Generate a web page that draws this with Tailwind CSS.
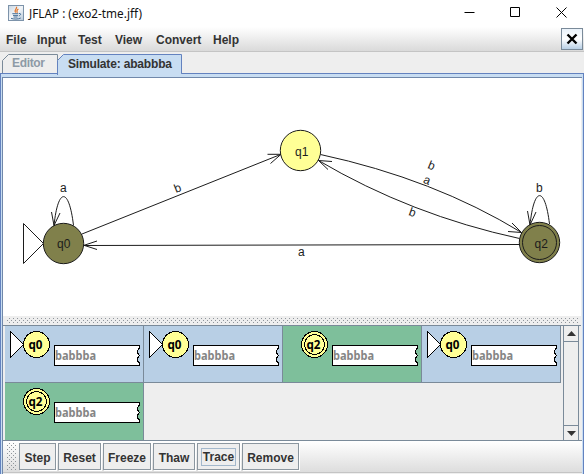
<!DOCTYPE html>
<html lang="en">
<head>
<meta charset="utf-8">
<title>JFLAP : (exo2-tme.jff)</title>
<script src="https://cdn.jsdelivr.net/npm/@tailwindcss/browser@4"></script>
</head>
<body class="w-[584px] h-[474px] overflow-hidden bg-[#eeeeee] font-['Liberation_Sans',Arial,sans-serif] text-[12px] text-[#333333]">
<svg class="absolute w-0 h-0">
  <defs>
    <pattern id="dots" width="4" height="4" patternUnits="userSpaceOnUse">
      <rect width="1" height="1" fill="#8f959b"/><rect x="2" y="2" width="1" height="1" fill="#8f959b"/>
    </pattern>
    <symbol id="tape" viewBox="0 0 139 57">
      <path d="M49.5 19.5H134.5V22L132.5 24.5V27L134.5 29.5L132.5 32V35L134.5 37V39.5H49.5Z" fill="#fff" stroke="#000" shape-rendering="crispEdges"/>
      <text x="50" y="34" font-family="'Noto Sans',sans-serif" font-size="12" font-weight="bold" fill="#858585" textLength="41" lengthAdjust="spacingAndGlyphs">babbba</text>
    </symbol>
    <symbol id="cfg0" viewBox="0 0 139 57">
      <path d="M5.5 5.5V31.5L18.5 18.5Z" fill="#fff" stroke="#000" shape-rendering="crispEdges"/>
      <circle cx="31.5" cy="18.5" r="13" fill="#ffff96" stroke="#000" shape-rendering="crispEdges"/>
      <text x="23.500" y="23" font-family="'Noto Sans',sans-serif" font-size="12" font-weight="bold" fill="#000" textLength="14" lengthAdjust="spacingAndGlyphs">q0</text>
      <use href="#tape" width="139" height="57"/>
    </symbol>
    <symbol id="cfg2" viewBox="0 0 139 57">
      <circle cx="31.5" cy="18.5" r="13" fill="#ffff96" stroke="#000" shape-rendering="crispEdges"/>
      <circle cx="31.5" cy="18.5" r="10" fill="none" stroke="#000" shape-rendering="crispEdges"/>
      <text x="23.500" y="23" font-family="'Noto Sans',sans-serif" font-size="12" font-weight="bold" fill="#000" textLength="14" lengthAdjust="spacingAndGlyphs">q2</text>
      <use href="#tape" width="139" height="57"/>
    </symbol>
  </defs>
</svg>
<div class="flex flex-col w-[584px] h-[474px]">
  <header class="h-[27px] shrink-0 bg-white flex items-center justify-between pl-2 pr-[10px]">
    <div class="flex items-center">
      <svg class="w-4 h-4 relative -top-px" viewBox="0 0 16 16">
        <defs><linearGradient id="jv" x1="0" y1="0" x2="1" y2="1"><stop offset="0" stop-color="#c9d6e2"/><stop offset=".5" stop-color="#f3f6f9"/><stop offset="1" stop-color="#b5c7d8"/></linearGradient></defs>
        <rect x=".5" y=".5" width="15" height="15" fill="url(#jv)" stroke="#7d93aa"/>
        <path d="M8.5 1.8C9.5 4 5.5 4.6 7.6 7.6M10.4 4C8 5.3 8.8 6 9.3 7.8" fill="none" stroke="#e0762c" stroke-width="1.2"/>
        <path d="M4.3 8.7H10.3M5 10.4H10M11 8.5C13.4 8 13 10.4 10.8 10.9M5.5 12H9.5M3 13.3C5.5 14.4 10.5 14.3 12.8 13" fill="none" stroke="#476f96"/>
      </svg>
      <svg class="w-[130px] h-[22px]"><text x="5" y="14.5" font-family="'Noto Sans','Open Sans',sans-serif" font-size="12" fill="#111" textLength="113" lengthAdjust="spacingAndGlyphs">JFLAP : (exo2-tme.jff)</text></svg>
    </div>
    <div class="flex items-center gap-[35px] relative -top-px">
      <svg class="w-[11px] h-[11px]" viewBox="0 0 11 11"><path d="M.5 5.5H10.5" stroke="#000"/></svg>
      <svg class="w-[11px] h-[11px]" viewBox="0 0 11 11"><path d="M1 1H10V10H1Z" transform="translate(-.5 -.5)" fill="none" stroke="#000"/></svg>
      <svg class="w-[11px] h-[11px] mr-[7px]" viewBox="0 0 11 11"><path d="M.5 .5L10.5 10.5M10.5 .5L.5 10.5" stroke="#000"/></svg>
    </div>
  </header>
  <nav class="h-[25px] shrink-0 flex items-center justify-between bg-linear-to-b from-white to-[#dadada] border-b border-[#c4c4c4] pl-[6px] pr-px font-bold">
    <div class="flex items-center gap-[13px] leading-[24px] pt-px">
      <span class="w-[18px] whitespace-nowrap">File</span>
      <span class="w-[28px]">Input</span>
      <span class="w-[24px]">Test</span>
      <span class="w-[28px]">View</span>
      <span class="w-[44px]">Convert</span>
      <span>Help</span>
    </div>
    <button class="w-[22px] h-[22px] border border-[#7a8a99] bg-linear-to-b from-[#eaf2fa] via-white to-[#b8cfe5] flex items-center justify-center">
      <svg class="w-[12px] h-[12px]" viewBox="0 0 12 12"><path d="M1.5 1.5L10.5 10.5M10.5 1.5L1.5 10.5" stroke="#000" stroke-width="2.4"/></svg>
    </button>
  </nav>
  <svg class="w-[584px] h-[26px] shrink-0 block font-bold" viewBox="0 52 584 26">
    <rect x="0" y="74" width="584" height="4" fill="#c8ddf2"/>
    <path d="M0 73.5H584" stroke="#6382bf"/>
    <path d="M2.5 73V60.500L8.500 54.500H57.500V73" fill="#eeeeee" stroke="#7a8a99"/>
    <path d="M57.500 75V60.500L63.500 54.500H181.500V73.500" fill="#c8ddf2" stroke="#6382bf"/>
    <rect x="58" y="72" width="123" height="4" fill="#c8ddf2"/>
    <path d="M.5 78V73.500M583.500 78V73.500" stroke="#6382bf"/>
    <path d="M2 77.500H582" stroke="#7088aa"/>
    <text x="12" y="67" font-size="12" fill="#8d9aa6" textLength="33">Editor</text>
    <text x="68" y="68" font-size="12" fill="#333" textLength="104">Simulate: ababbba</text>
  </svg>
  <main class="flex flex-col grow border-l border-r border-[#6382bf]">
    <div class="flex flex-col grow border-x border-x-[#c8ddf2]">
    <div class="flex flex-col grow border-l border-[#7088aa]">
      <svg class="block w-[578px] h-[238px] shrink-0 bg-white" viewBox="3 78 578 238" fill="none" stroke="#1c1c1c">
        <path d="M23.500 223.500V263.500L43.500 243.500Z"/>
        <circle cx="63.500" cy="243.500" r="20.200" fill="#80804b"/>
        <circle cx="300.500" cy="150.500" r="20.200" fill="#ffff96"/>
        <circle cx="539.500" cy="242.500" r="20.200" fill="#80804b"/>
        <circle cx="539.500" cy="242.500" r="17"/>
        <path d="M54 225.500C58 187 69 187 73.500 225.500M51.500 212L54 225.500L60 213"/>
        <path d="M530 225C534 186 545 186 549.500 224M527.500 211L530 225L536 212"/>
        <path d="M82 234L280.500 154.500M267.500 154.300H281L270.500 163.500"/>
        <path d="M519.500 244.500L84 245.500M97 241L84 245.300L97 249.500"/>
        <path d="M320.500 154.500Q434 179 521.500 232.500M512 223L521.500 232.500L508 231.500"/>
        <path d="M519.500 238.500Q411 215 318.500 160.500M332 161.500L318.500 160.500L328 169.500"/>
        <g fill="#1c1c1c" stroke="none" font-size="12">
          <text x="57" y="248">q0</text><text x="295" y="156">q1</text><text x="534.500" y="248">q2</text>
          <text x="60" y="192">a</text><text x="536" y="192">b</text><text x="298" y="256">a</text>
          <text transform="translate(176 193) rotate(-22)">b</text>
          <text transform="translate(427 168) rotate(22)">b</text>
          <text transform="translate(422.500 182.500) rotate(22)">a</text>
          <text transform="translate(408 215) rotate(20)">b</text>
        </g>
      </svg>
      <svg class="block w-[578px] h-[10px] shrink-0" viewBox="0 0 578 10" shape-rendering="crispEdges"><rect width="578" height="10" fill="#eeeeee"/><path d="M0 9.500H578" stroke="#7a8a99"/><rect x="3" y="2" width="573" height="6" fill="url(#dots)"/></svg>
      <div class="flex h-[115px] shrink-0 pl-[2px] border-b border-[#7a8a99]">
        <div class="grid grid-cols-[repeat(4,139px)] grid-rows-[57px_57px] w-[557px]">
          <div class="bg-[#b8cfe5] border-b border-r border-[#7a8a99]"><svg class="w-[139px] h-[57px]"><use href="#cfg0" width="139" height="57"/></svg></div>
          <div class="bg-[#b8cfe5] border-b border-r border-[#7a8a99]"><svg class="w-[139px] h-[57px]"><use href="#cfg0" width="139" height="57"/></svg></div>
          <div class="bg-[#7ebf9b] border-b border-r border-[#7a8a99]"><svg class="w-[139px] h-[57px]"><use href="#cfg2" width="139" height="57"/></svg></div>
          <div class="bg-[#b8cfe5] border-b border-r border-[#7a8a99]"><svg class="w-[139px] h-[57px]"><use href="#cfg0" width="139" height="57"/></svg></div>
          <div class="bg-[#7ebf9b] border-r border-[#7a8a99]"><svg class="w-[139px] h-[57px]"><use href="#cfg2" width="139" height="57"/></svg></div>
        </div>
        <div class="w-[16px] ml-px flex flex-col justify-between border-x border-[#7a8a99] bg-[#eeeeee]">
          <div class="h-[16px] border-b border-[#7a8a99] flex items-center justify-center"><svg class="w-[9px] h-[5px]" viewBox="0 0 9 5"><path d="M4.500 0L9 5H0Z" fill="#333"/></svg></div>
          <div class="h-[15px] border-t border-[#7a8a99] flex items-center justify-center"><svg class="w-[9px] h-[5px]" viewBox="0 0 9 5"><path d="M4.500 5L9 0H0Z" fill="#333"/></svg></div>
        </div>
      </div>
      <div class="flex h-[32px] shrink-0 bg-linear-to-b from-white to-[#dddddd] border-b border-[#c4c4c4] pt-[2px] pl-[2px] gap-[2px] font-bold">
        <svg class="w-[12px] h-[28px]" viewBox="0 0 12 28" shape-rendering="crispEdges"><rect x="1" width="10" height="28" fill="url(#dots)"/></svg>
        <div class="flex gap-[2px] h-[27px]">
          <button class="w-[37px] border border-[#8b969f] bg-[#eeeeee] shadow-[1px_1px_0_#fff] pt-[2px]">Step</button>
          <button class="w-[43px] border border-[#8b969f] bg-[#eeeeee] shadow-[1px_1px_0_#fff] pt-[2px]">Reset</button>
          <button class="w-[48px] border border-[#8b969f] bg-[#eeeeee] shadow-[1px_1px_0_#fff] pt-[2px]">Freeze</button>
          <button class="w-[42px] border border-[#8b969f] bg-[#eeeeee] shadow-[1px_1px_0_#fff] pt-[2px]">Thaw</button>
          <button class="w-[43px] border border-[#8b969f] bg-[#eeeeee] shadow-[1px_1px_0_#fff] pt-px flex items-center justify-center"><span class="border border-[#a3b8cc] w-[35px] h-[18px] leading-[17px]">Trace</span></button>
          <button class="w-[57px] border border-[#8b969f] bg-[#eeeeee] shadow-[1px_1px_0_#fff] pt-[2px]">Remove</button>
        </div>
      </div>
    </div>
    </div>
  </main>
</div>
</body>
</html>
